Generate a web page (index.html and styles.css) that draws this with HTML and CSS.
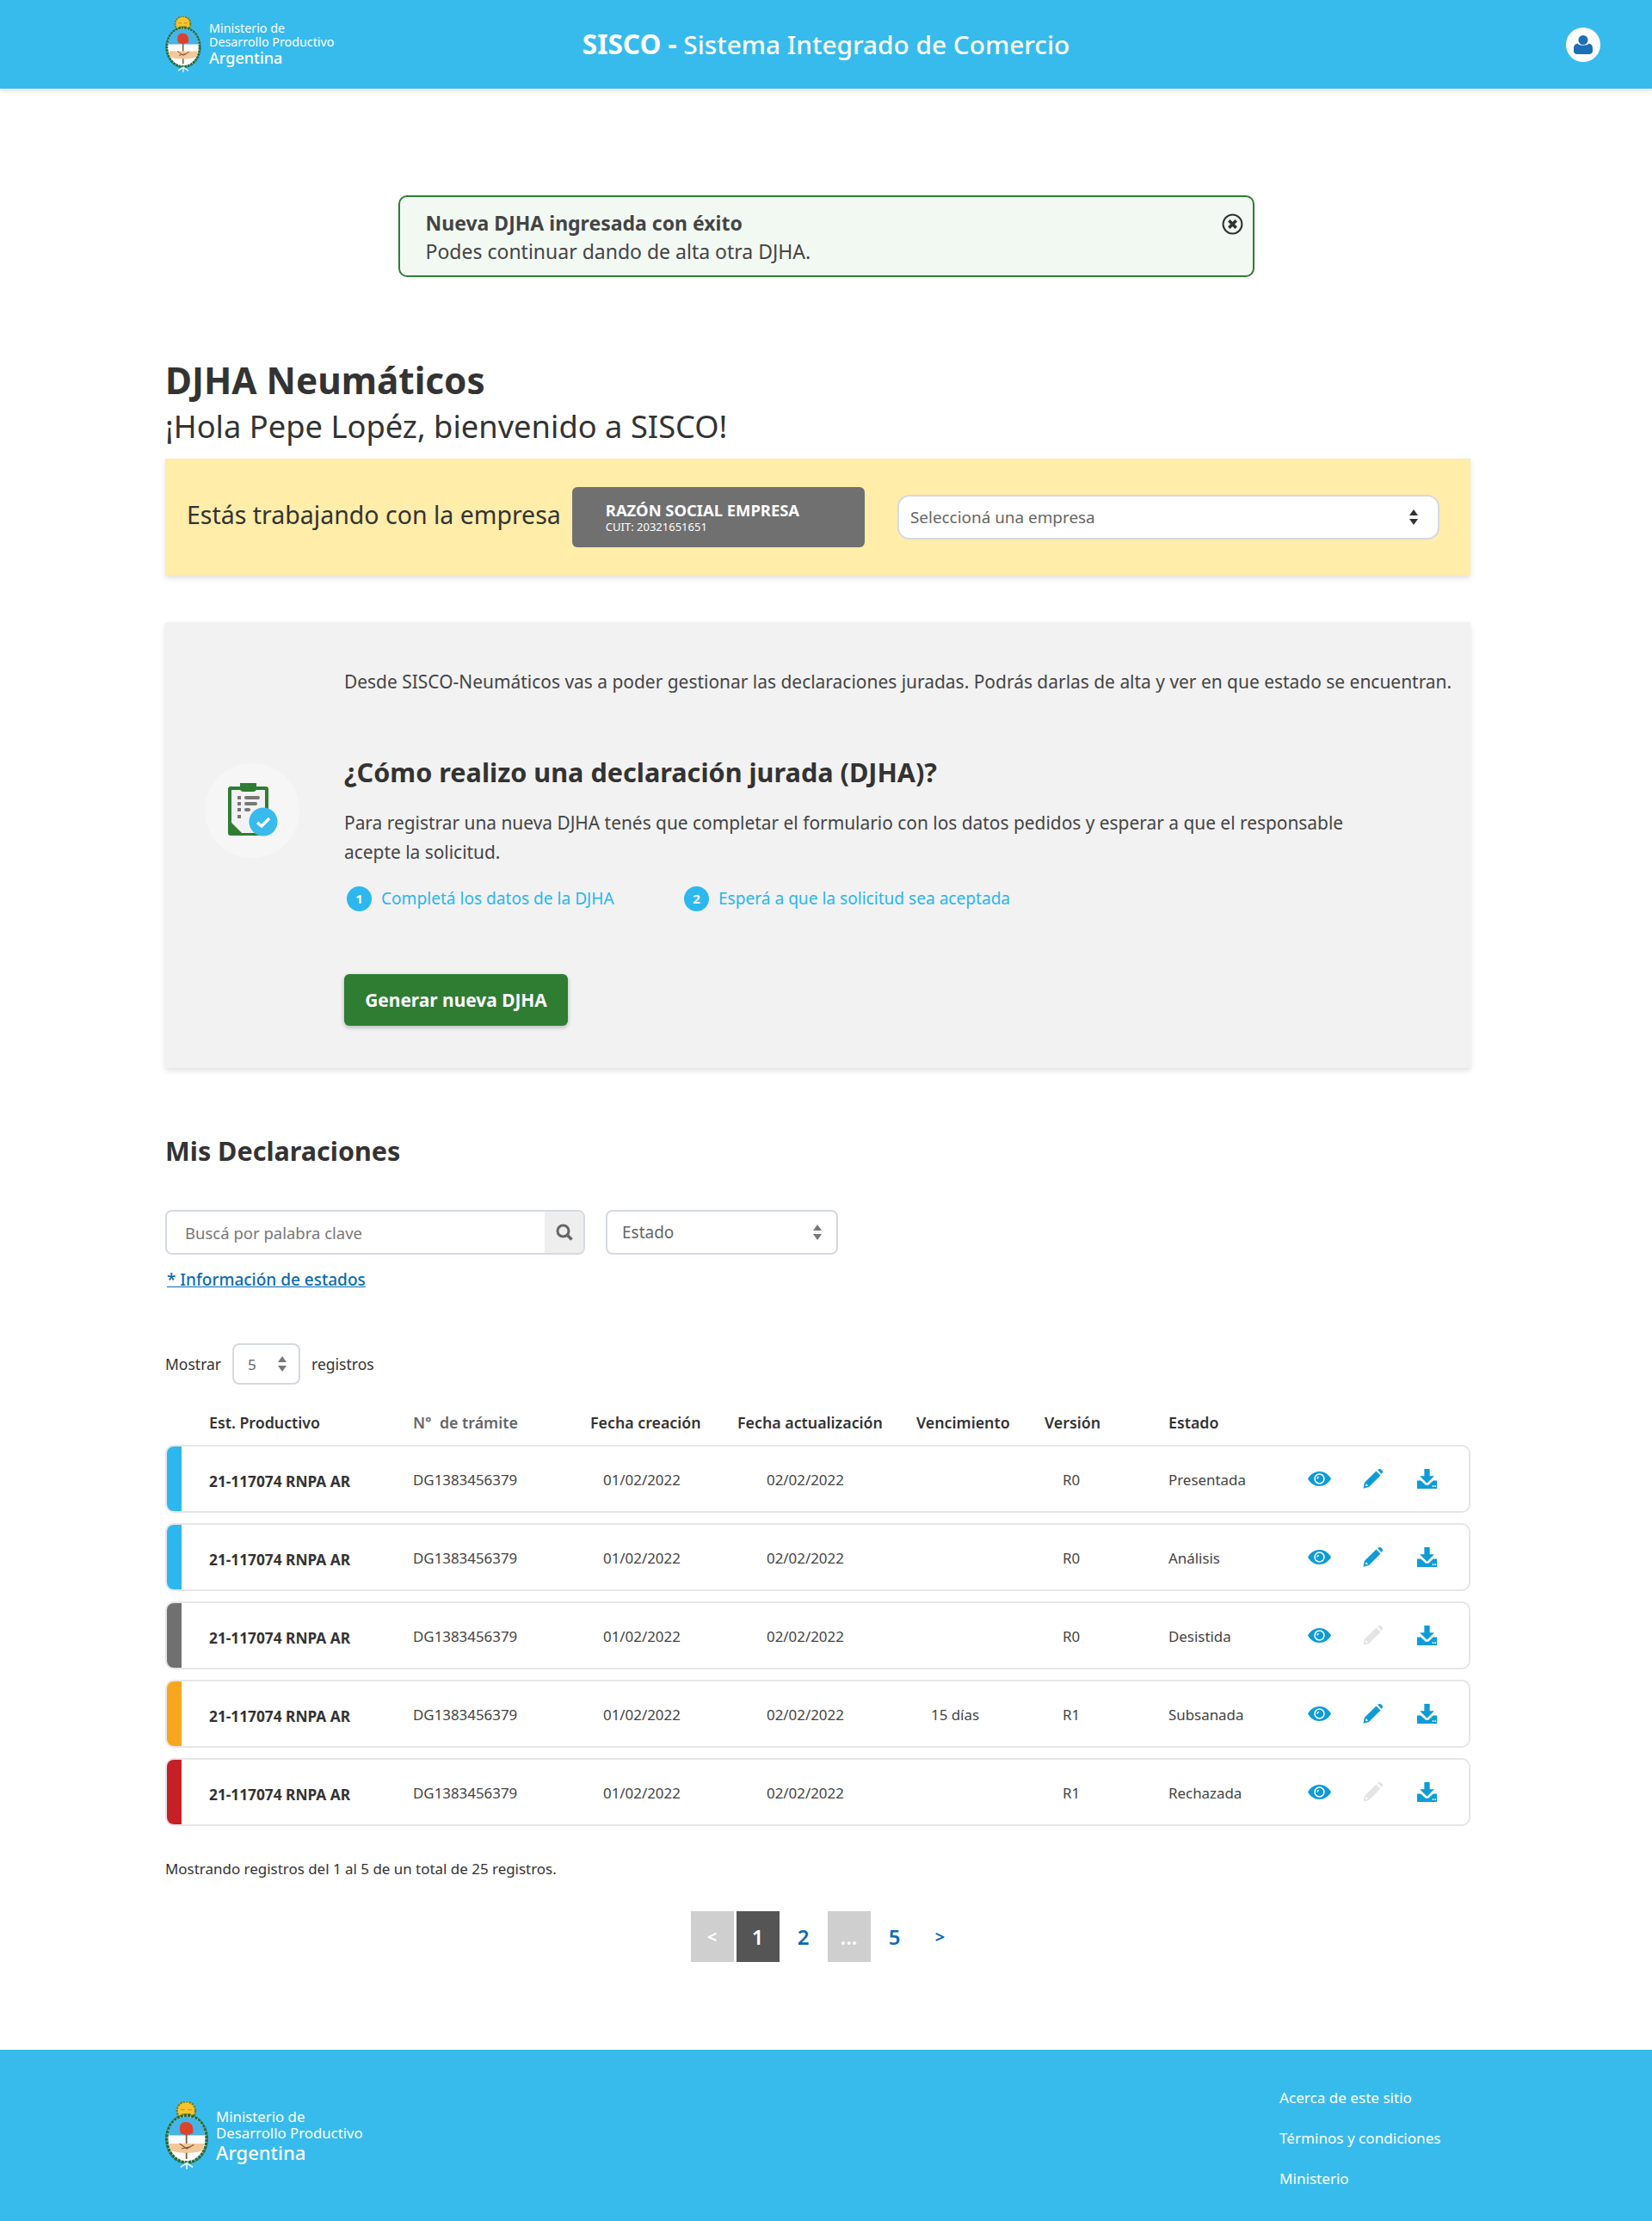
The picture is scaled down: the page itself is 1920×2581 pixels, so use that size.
FILE: index.html
```html
<!DOCTYPE html>
<html lang="es">
<head>
  <meta charset="UTF-8">
  <title>SISCO - DJHA Neumáticos</title>
  <link rel="stylesheet" href="styles.css">
</head>
<body>
  <!-- Iconos compartidos -->
  <svg class="defs" width="0" height="0">
    <symbol id="escudo" viewBox="0 0 42 66">
      <circle cx="20.500" cy="9" r="9" fill="#f7c52b" stroke="#6f7a3a" stroke-width="2" stroke-dasharray="2 1"/>
      <path d="M15 8 h4 M22 8 h4 M16 12 h9" stroke="#b8902a" stroke-width="1"/>
      <ellipse cx="21" cy="36.500" rx="19.500" ry="23" fill="#fff" stroke="#2b6b3a" stroke-width="3" stroke-dasharray="3 .6"/>
      <path d="M3.500 33 C3.500 22 11 15 21 15 C31 15 38.500 22 38.500 33 Z" fill="#45b4e6"/>
      <path d="M4 41 H38 L36.500 48 C28 51 14 51 5.500 48 Z" fill="#f4c79a"/>
      <path d="M20 28 h1.500 v13 h-1.500 Z M20 50 h1.500 v6 h-1.500 Z" fill="#7a5a3a"/>
      <path d="M15 31 C13 24 15 20 20 20 C26 20 28 25 27 31 C23 33 19 33 15 31 Z" fill="#e0402a"/>
      <path d="M14 41 L21 46 L28 42 M16 46 L25 44" stroke="#7a5a3a" stroke-width="1" fill="none"/>
      <path d="M15 64 L21 60 L27 64 M21 60 V66" stroke="#dff2fb" stroke-width="1.500" fill="none"/>
    </symbol>
    <symbol id="ojo" viewBox="0 0 27 17">
      <path fill-rule="evenodd" d="M0 8.500 C3 3.200 7.800 0 13.500 0 S24 3.200 27 8.500 C24 13.800 19.200 17 13.500 17 S3 13.800 0 8.500 Z M13.500 2.300 a6.200 6.200 0 1 0 0 12.400 a6.200 6.200 0 1 0 0 -12.400 Z"/>
      <path fill-rule="evenodd" d="M13.500 3.800 a4.700 4.700 0 1 0 0 9.400 a4.700 4.700 0 1 0 0 -9.400 Z M12.800 5.800 a2.400 2.400 0 0 0 -2.400 2.900 c1.500 0 2.600 -1.200 2.400 -2.900 Z"/>
    </symbol>
    <symbol id="lapiz" viewBox="0 0 23 23">
      <path fill-rule="evenodd" d="M15.500 2.500 L20.500 7.500 L7 21 L0.500 22.800 L1.800 16 Z M3.600 17 L3 20.200 L6.200 19.400 Z"/>
      <path d="M17 1 L18.500 0.300 C19.500 -0.200 20.500 -0.100 21 0.500 L22.600 2.100 C23.200 2.800 23.200 3.800 22.600 4.500 L21.500 6 Z"/>
    </symbol>
    <symbol id="bajar" viewBox="0 0 22 22">
      <path d="M8 0 H14 V8 H19 L11 16 L3 8 H8 Z"/>
      <path fill-rule="evenodd" d="M0 13 H4 L9.500 18 H12.500 L18 13 H22 V22 H0 Z M17 18.500 h1.500 v1.500 h-1.500 Z M19.500 18.500 h1.500 v1.500 h-1.500 Z"/>
    </symbol>
    <symbol id="flechas" viewBox="0 0 10 18">
      <path d="M5 0 L10 7 H0 Z M0 11 H10 L5 18 Z"/>
    </symbol>
  </svg>

  <header class="top-bar">
    <a class="brand" href="#">
      <svg class="brand-shield"><use href="#escudo"/></svg>
      <span class="brand-text">
        <span>Ministerio de</span>
        <span>Desarrollo Productivo</span>
        <b>Argentina</b>
      </span>
    </a>
    <div class="top-title"><b>SISCO -</b> Sistema Integrado de Comercio</div>
    <a class="user-btn" href="#">
      <svg viewBox="0 0 24 24" width="24" height="24"><circle cx="12" cy="6.500" r="5.500"/><path d="M5.500 10.500 C7 13.500 17 13.500 18.500 10.500 C21.500 11 23 13 23 16 V19 C23 22 21 23 18 23 H6 C3 23 1 22 1 19 V16 C1 13 2.500 11 5.500 10.500 Z"/></svg>
    </a>
  </header>

  <div class="alert">
    <div>
      <strong>Nueva DJHA ingresada con éxito</strong>
      <p>Podes continuar dando de alta otra DJHA.</p>
    </div>
    <svg class="alert-close" viewBox="0 0 24 24" width="25" height="25"><circle cx="12" cy="12" r="10.500" fill="none" stroke="#333" stroke-width="2"/><path d="M8 8 L16 16 M16 8 L8 16" stroke="#333" stroke-width="3.500"/></svg>
  </div>

  <main class="page">
    <h1>DJHA Neumáticos</h1>
    <h2 class="welcome">¡Hola Pepe Lopéz, bienvenido a SISCO!</h2>

    <section class="company-bar">
      <span class="company-label">Estás trabajando con la empresa</span>
      <div class="company-chip">
        <b>RAZÓN SOCIAL EMPRESA</b>
        <small>CUIT: 20321651651</small>
      </div>
      <div class="select company-select">
        <span>Seleccioná una empresa</span>
        <svg class="arrows dark"><use href="#flechas"/></svg>
      </div>
    </section>

    <section class="intro">
      <div class="intro-icon">
        <svg viewBox="0 0 60 64" width="60" height="64">
          <rect x="2" y="4" width="47" height="57" rx="3" fill="#2e7d33"/>
          <path d="M6 8 H45 V58 H18 L6 46 Z" fill="#f2f2f2"/>
          <path d="M16 0 H35 V6 C35 9 33 10 31 10 H20 C18 10 16 9 16 6 Z" fill="#2e7d33"/>
          <g fill="#777">
            <rect x="13" y="15" width="4" height="4"/><rect x="21" y="15" width="18" height="4" rx="2"/>
            <rect x="13" y="22" width="4" height="4"/><rect x="21" y="22" width="15" height="4" rx="2"/>
            <rect x="13" y="29" width="4" height="4"/><rect x="21" y="29" width="7" height="4" rx="2"/>
            <rect x="13" y="37" width="4" height="4"/>
          </g>
          <circle cx="43" cy="45" r="16.500" fill="#37bbed"/>
          <path d="M36 46 L41 50 L50 41" fill="none" stroke="#fff" stroke-width="3.500"/>
        </svg>
      </div>
      <div class="intro-body">
        <p class="intro-lead">Desde SISCO-Neumáticos vas a poder gestionar las declaraciones juradas. Podrás darlas de alta y ver en que estado se encuentran.</p>
        <h3>¿Cómo realizo una declaración jurada (DJHA)?</h3>
        <p class="intro-text">Para registrar una nueva DJHA tenés que completar el formulario con los datos pedidos y esperar a que el responsable<br>acepte la solicitud.</p>
        <div class="steps">
          <div class="step step-one"><span class="step-num">1</span>Completá los datos de la DJHA</div>
          <div class="step"><span class="step-num">2</span>Esperá a que la solicitud sea aceptada</div>
        </div>
        <a class="btn-green" href="#">Generar nueva DJHA</a>
      </div>
    </section>

    <h3 class="list-title">Mis Declaraciones</h3>

    <div class="filters">
      <div class="search">
        <input type="text" placeholder="Buscá por palabra clave">
        <span class="search-btn">
          <svg viewBox="0 0 20 20" width="20" height="20"><circle cx="8.500" cy="8.500" r="6.500" fill="none" stroke="#666" stroke-width="3"/><path d="M13 13 L18.500 18.500" stroke="#666" stroke-width="3.500"/></svg>
        </span>
      </div>
      <div class="select state-select">
        <span>Estado</span>
        <svg class="arrows"><use href="#flechas"/></svg>
      </div>
    </div>
    <a class="info-link" href="#">* Información de estados</a>

    <div class="page-size">
      <span>Mostrar</span>
      <div class="select size-select">
        <span>5</span>
        <svg class="arrows"><use href="#flechas"/></svg>
      </div>
      <span>registros</span>
    </div>

    <div class="table-head table-cols">
      <span></span>
      <span>Est. Productivo</span>
      <span class="muted">N°&nbsp; de trámite</span>
      <span>Fecha creación</span>
      <span>Fecha actualización</span>
      <span>Vencimiento</span>
      <span>Versión</span>
      <span>Estado</span>
    </div>

    <div class="rows">
      <div class="row table-cols">
        <span class="stripe blue"></span>
        <b>21-117074 RNPA AR</b>
        <span>DG1383456379</span>
        <span class="c-created">01/02/2022</span>
        <span class="c-updated">02/02/2022</span>
        <span class="c-due"></span>
        <span class="c-version">R0</span>
        <span>Presentada</span>
        <div class="actions">
          <svg class="ico-eye"><use href="#ojo"/></svg>
          <svg class="ico"><use href="#lapiz"/></svg>
          <svg class="ico"><use href="#bajar"/></svg>
        </div>
      </div>
      <div class="row table-cols">
        <span class="stripe blue"></span>
        <b>21-117074 RNPA AR</b>
        <span>DG1383456379</span>
        <span class="c-created">01/02/2022</span>
        <span class="c-updated">02/02/2022</span>
        <span class="c-due"></span>
        <span class="c-version">R0</span>
        <span>Análisis</span>
        <div class="actions">
          <svg class="ico-eye"><use href="#ojo"/></svg>
          <svg class="ico"><use href="#lapiz"/></svg>
          <svg class="ico"><use href="#bajar"/></svg>
        </div>
      </div>
      <div class="row table-cols">
        <span class="stripe gray"></span>
        <b>21-117074 RNPA AR</b>
        <span>DG1383456379</span>
        <span class="c-created">01/02/2022</span>
        <span class="c-updated">02/02/2022</span>
        <span class="c-due"></span>
        <span class="c-version">R0</span>
        <span>Desistida</span>
        <div class="actions">
          <svg class="ico-eye"><use href="#ojo"/></svg>
          <svg class="ico disabled"><use href="#lapiz"/></svg>
          <svg class="ico"><use href="#bajar"/></svg>
        </div>
      </div>
      <div class="row table-cols">
        <span class="stripe orange"></span>
        <b>21-117074 RNPA AR</b>
        <span>DG1383456379</span>
        <span class="c-created">01/02/2022</span>
        <span class="c-updated">02/02/2022</span>
        <span class="c-due">15 días</span>
        <span class="c-version">R1</span>
        <span>Subsanada</span>
        <div class="actions">
          <svg class="ico-eye"><use href="#ojo"/></svg>
          <svg class="ico"><use href="#lapiz"/></svg>
          <svg class="ico"><use href="#bajar"/></svg>
        </div>
      </div>
      <div class="row table-cols">
        <span class="stripe red"></span>
        <b>21-117074 RNPA AR</b>
        <span>DG1383456379</span>
        <span class="c-created">01/02/2022</span>
        <span class="c-updated">02/02/2022</span>
        <span class="c-due"></span>
        <span class="c-version">R1</span>
        <span>Rechazada</span>
        <div class="actions">
          <svg class="ico-eye"><use href="#ojo"/></svg>
          <svg class="ico disabled"><use href="#lapiz"/></svg>
          <svg class="ico"><use href="#bajar"/></svg>
        </div>
      </div>
    </div>

    <p class="table-info">Mostrando registros del 1 al 5 de un total de 25 registros.</p>

    <nav class="pager">
      <a class="off small" href="#">&lt;</a>
      <a class="current" href="#">1</a>
      <a href="#">2</a>
      <a class="off dots" href="#">...</a>
      <a href="#">5</a>
      <a class="small" href="#">&gt;</a>
    </nav>
  </main>

  <footer class="site-footer">
    <a class="brand brand-big" href="#">
      <svg class="brand-shield"><use href="#escudo"/></svg>
      <span class="brand-text">
        <span>Ministerio de</span>
        <span>Desarrollo Productivo</span>
        <b>Argentina</b>
      </span>
    </a>
    <ul class="footer-links">
      <li><a href="#">Acerca de este sitio</a></li>
      <li><a href="#">Términos y condiciones</a></li>
      <li><a href="#">Ministerio</a></li>
    </ul>
  </footer>
</body>
</html>
```

FILE: styles.css
```css
* {
  box-sizing: border-box;
}
body {
  margin: 0;
  font-family: "Noto Sans", "Open Sans", sans-serif;
  color: #333;
  background: #fff;
}
a {
  text-decoration: none;
  color: inherit;
}
p, h1, h2, h3, ul {
  margin: 0;
  padding: 0;
}
.defs {
  position: absolute;
}

/* barra superior */
.top-bar {
  height: 103px;
  background: #37bbed;
  box-shadow: 0 2px 6px rgba(0, 0, 0, .15);
  display: grid;
  grid-template-columns: 1fr auto 1fr;
  align-items: center;
  padding: 0 60px;
  color: #fff;
}
.brand {
  display: flex;
  align-items: center;
  gap: 9px;
  margin-left: 132px;
  color: #fff;
}
.brand-shield {
  width: 42px;
  height: 65px;
}
.brand-text {
  display: flex;
  flex-direction: column;
  font-size: 14.300px;
  line-height: 16px;
}
.brand-text b {
  font-size: 18px;
  font-weight: 500;
  line-height: 21px;
}
.top-title {
  font-size: 29.800px;
  line-height: 40px;
  font-weight: 500;
}
.top-title b {
  font-size: 31.500px;
}
.user-btn {
  justify-self: end;
  width: 40px;
  height: 40px;
  border-radius: 50%;
  background: #fff;
  display: flex;
  align-items: center;
  justify-content: center;
  fill: #1b6fb5;
}

/* aviso */
.alert {
  width: 995px;
  height: 95px;
  margin: 124px auto 0;
  padding: 14px 11px 0 30px;
  display: flex;
  justify-content: space-between;
  border: 2px solid #2e7d33;
  border-radius: 10px;
  background: #f2f9f3;
  font-size: 23px;
  line-height: 33px;
  color: #444;
}
.alert-close {
  margin-top: 5px;
}

.page {
  padding: 0 211px 0 192px;
}
h1 {
  margin-top: 92px;
  font-size: 42.300px;
  line-height: 56px;
  font-weight: 700;
}
.welcome {
  font-size: 36.300px;
  line-height: 50px;
  font-weight: 400;
}

/* empresa */
.company-bar {
  height: 136px;
  margin-top: 13px;
  padding: 0 36px 0 25px;
  display: flex;
  align-items: center;
  background: #ffeda9;
  box-shadow: 0 3px 6px rgba(0, 0, 0, .12);
}
.company-label {
  font-size: 28.500px;
  white-space: nowrap;
  margin-bottom: 6px;
}
.company-chip {
  width: 340px;
  height: 70px;
  margin-left: 13px;
  padding: 0 0 0 39px;
  border-radius: 6px;
  background: #707070;
  color: #fff;
  display: flex;
  flex-direction: column;
  justify-content: center;
  flex: none;
}
.company-chip b {
  font-size: 18.400px;
  line-height: 22px;
}
.company-chip small {
  font-size: 13px;
  line-height: 16px;
}
.select {
  display: flex;
  align-items: center;
  justify-content: space-between;
  background: #fff;
  border: 2px solid #d5d9e2;
  border-radius: 8px;
  color: #666;
}
.arrows {
  width: 10px;
  height: 18px;
  fill: #777;
}
.arrows.dark {
  fill: #333;
}
.company-select {
  width: 630px;
  height: 52px;
  margin-left: auto;
  padding: 0 23px 0 13px;
  border-radius: 14px;
  font-size: 18.900px;
}

/* bloque gris */
.intro {
  height: 518px;
  margin-top: 54px;
  display: flex;
  background: #f2f2f2;
  box-shadow: 0 3px 6px rgba(0, 0, 0, .12);
}
.intro-icon {
  width: 110px;
  height: 110px;
  margin: 164px 0 0 46px;
  border-radius: 50%;
  background: #f6f6f6;
  display: flex;
  align-items: center;
  justify-content: center;
  flex: none;
}
.intro-body {
  margin-left: 52px;
  padding-top: 52px;
}
.intro-lead, .intro-text {
  font-size: 20.900px;
  line-height: 34px;
  color: #444;
  white-space: nowrap;
}
.intro-lead {
  font-size: 20.950px;
}
.intro-body h3 {
  margin-top: 66px;
  font-size: 30.600px;
  line-height: 44px;
  font-weight: 700;
}
.intro-text {
  margin-top: 20px;
}
.steps {
  display: flex;
  margin-top: 22px;
  padding-left: 3px;
}
.step {
  display: flex;
  align-items: center;
  gap: 11px;
  font-size: 19.100px;
  line-height: 30px;
  color: #29b6ee;
}
.step-one {
  width: 392px;
}
.step-num {
  width: 29px;
  height: 29px;
  border-radius: 50%;
  background: #2cb8ef;
  color: #fff;
  font-size: 15px;
  font-weight: 700;
  display: flex;
  align-items: center;
  justify-content: center;
}
.btn-green {
  width: 260px;
  height: 60px;
  margin-top: 73px;
  border-radius: 6px;
  background: #2e7d33;
  color: #fff;
  font-size: 20.900px;
  font-weight: 700;
  display: flex;
  align-items: center;
  justify-content: center;
  box-shadow: 0 2px 5px rgba(0, 0, 0, .25);
}

/* listado */
.list-title {
  margin-top: 74px;
  font-size: 30.500px;
  line-height: 44px;
  font-weight: 700;
}
.filters {
  display: flex;
  gap: 24px;
  margin-top: 47px;
}
.search {
  width: 488px;
  height: 52px;
  display: flex;
  border: 2px solid #d5d9e2;
  border-radius: 8px;
  overflow: hidden;
}
.search input {
  flex: 1;
  min-width: 0;
  border: 0;
  outline: 0;
  padding: 0 0 0 21px;
  font: inherit;
  font-size: 18.500px;
}
.search input::placeholder {
  color: #777;
}
.search-btn {
  width: 45px;
  background: #eee;
  display: flex;
  align-items: center;
  justify-content: center;
}
.state-select {
  width: 270px;
  height: 52px;
  padding: 0 17px;
  font-size: 19px;
}
.info-link {
  display: block;
  margin-top: 15px;
  padding-left: 2px;
  font-size: 19px;
  line-height: 28px;
  font-weight: 500;
  color: #0a6cb6;
  text-decoration: underline;
}
.page-size {
  display: flex;
  align-items: center;
  gap: 13px;
  margin-top: 60px;
  font-size: 17.500px;
}
.size-select {
  width: 79px;
  height: 48px;
  padding: 0 14px 0 16px;
  font-size: 17px;
}

.table-cols {
  display: grid;
  grid-template-columns: 51px 237px 206px 171px 208px 149px 144px 150px 1fr;
  align-items: center;
}
.table-head {
  margin-top: 30px;
  font-size: 17.800px;
  line-height: 28px;
  font-weight: 600;
}
.muted {
  color: #666;
}
.rows {
  display: flex;
  flex-direction: column;
  gap: 12px;
  margin-top: 12px;
}
.row {
  grid-template-columns: 49px 237px 206px 171px 208px 149px 144px 150px 1fr;
  height: 79px;
  border: 2px solid #e6e6e6;
  border-radius: 10px;
  font-size: 16.900px;
  color: #444;
  padding-top: 2px;
}
.row b {
  color: #333;
  font-weight: 700;
  font-size: 17.300px;
  padding-top: 3px;
}
.stripe {
  width: 17px;
  height: 75px;
  margin-top: -2px;
  border-radius: 8px 0 0 8px;
}
.blue { background: #2cb8ef; }
.gray { background: #707070; }
.orange { background: #f9a61f; }
.red { background: #c62026; }
.c-created { padding-left: 15px; }
.c-updated { padding-left: 34px; }
.c-due { padding-left: 17px; }
.c-version { padding-left: 21px; }
.actions {
  display: flex;
  align-items: center;
  margin: -3px 0 0 12px;
  fill: #0e9bd8;
}
.ico-eye {
  width: 27px;
  height: 17px;
}
.ico {
  width: 23px;
  height: 23px;
  margin-left: 37px;
}
.ico + .ico {
  margin-left: 40px;
}
.ico.disabled {
  fill: #e4e4e4;
}

.table-info {
  margin-top: 36px;
  font-size: 16.950px;
  line-height: 28px;
}
.pager {
  display: flex;
  justify-content: center;
  gap: 3px;
  margin-top: 35px;
  padding-left: 19px;
}
.pager a {
  width: 50px;
  height: 59px;
  display: flex;
  align-items: center;
  justify-content: center;
  color: #0a6cb6;
  font-size: 24px;
  font-weight: 600;
}
.pager .small {
  font-size: 20px;
  font-weight: 700;
}
.pager .off {
  background: #cfcfcf;
  color: #fff;
}
.pager .current {
  background: #555;
  color: #fff;
}

.site-footer {
  height: 199px;
  margin-top: 102px;
  padding: 0 211px 0 192px;
  background: #37bbed;
  display: flex;
  justify-content: space-between;
  color: #fff;
}
.brand-big {
  margin: 60px 0 0;
  align-self: flex-start;
}
.brand-big .brand-shield {
  width: 50px;
  height: 79px;
}
.brand-big .brand-text {
  font-size: 16.800px;
  line-height: 19px;
  padding-top: 2px;
}
.brand-big .brand-text b {
  font-size: 22px;
  line-height: 27px;
}
.footer-links {
  width: 222px;
  margin-top: 42px;
  list-style: none;
  font-size: 17.100px;
  line-height: 28px;
}
.footer-links li + li {
  margin-top: 19px;
}
```
